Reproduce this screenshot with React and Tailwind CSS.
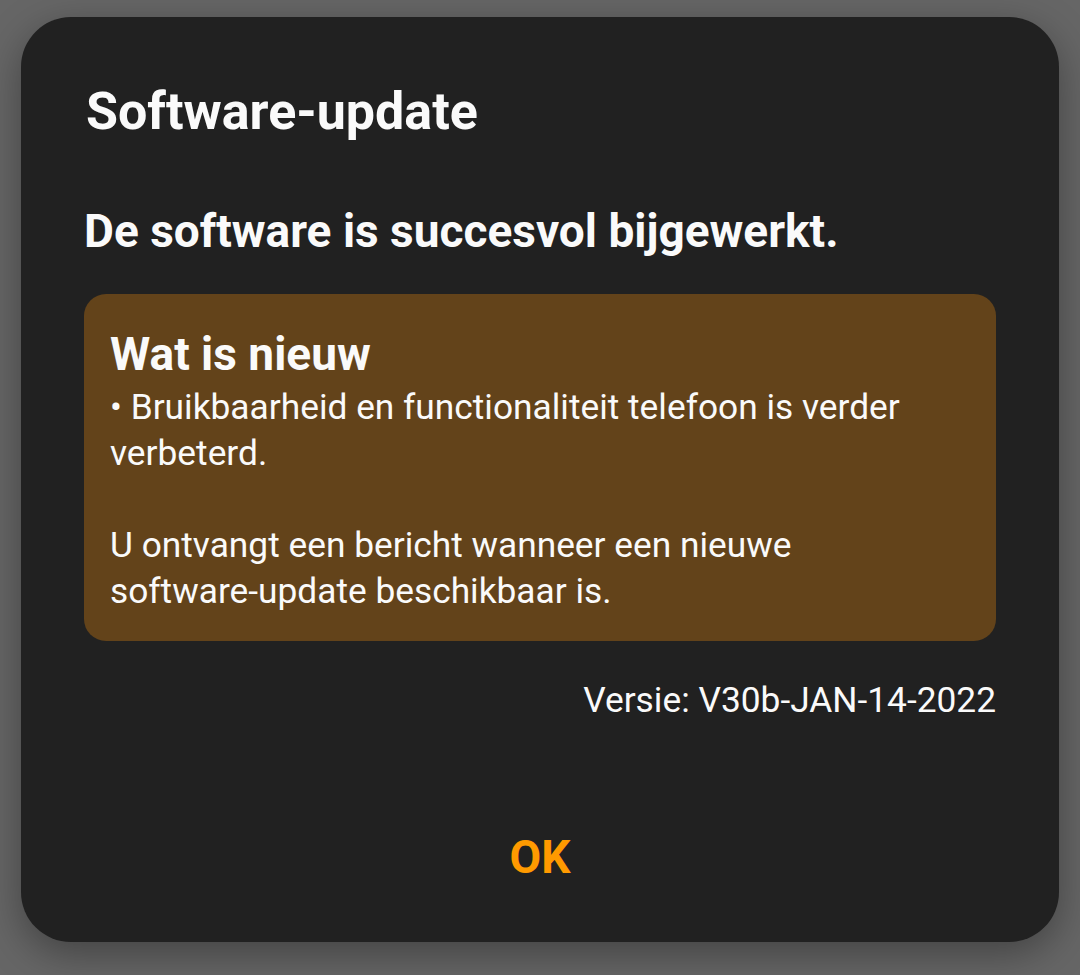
import React from "react";

export default function App() {
  return (
    <div
      className="min-h-[975px] w-[1080px] bg-[#666666] pt-[17px] pl-[21px]"
      style={{ fontFamily: "Roboto, 'Noto Sans', sans-serif" }}
    >
      <div className="w-[1038px] h-[925px] rounded-[50px] bg-[#212121] px-[63px] pt-[64px] shadow-[0_12px_40px_rgba(0,0,0,0.35)] flex flex-col">
        <h1 className="text-[52px] leading-[62px] font-bold text-[#fafafa] pl-[2px]">Software-update</h1>

        <p className="mt-[61px] text-[46px] leading-[54px] font-bold text-[#fafafa]">
          De software is succesvol bijgewerkt.
        </p>

        <div className="mt-[36px] rounded-[22px] bg-[#63431a] pl-[26px] pr-[20px] pt-[33px] pb-[27px]">
          <h2 className="text-[46px] leading-[54px] font-bold text-[#fafafa]">Wat is nieuw</h2>
          <div className="mt-[3px] text-[35.3px] leading-[46px] text-[#fafafa]">
            <p>• Bruikbaarheid en functionaliteit telefoon is verder verbeterd.</p>
            <p>&nbsp;</p>
            <p>
              U ontvangt een bericht wanneer een nieuwe{" "}
              <span className="whitespace-nowrap">software-update</span> beschikbaar is.
            </p>
          </div>
        </div>

        <p className="mt-[39px] text-right text-[35.3px] leading-[40px] text-[#fafafa]">
          Versie: V30b-JAN-14-2022
        </p>

        <button className="mt-[110px] self-center text-[46px] leading-[54px] font-bold text-[#ff9a00]">
          OK
        </button>
      </div>
    </div>
  );
}
